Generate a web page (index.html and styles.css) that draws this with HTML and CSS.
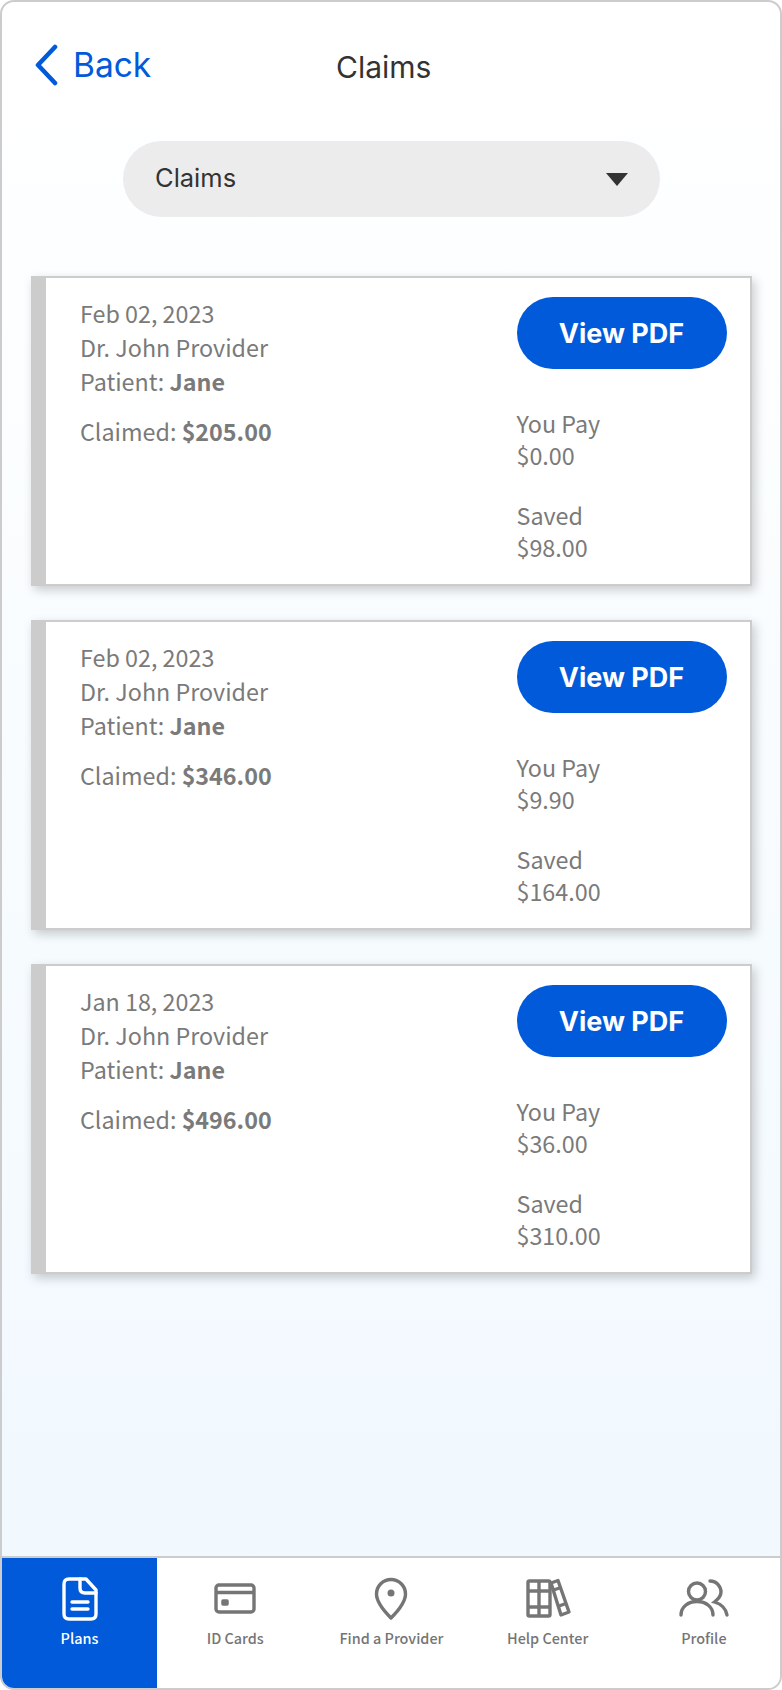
FILE: index.html
```html
<!DOCTYPE html>
<html lang="en">
<head>
    <meta charset="UTF-8">
    <meta name="viewport" content="width=device-width, initial-scale=1.0">
    <title>Claims</title>
    <link rel="stylesheet" href="styles.css">
</head>
<body>
    <div class="phone">
        <div class="content">
            <div class="top-bar">
                <a class="back-link" href="#">
                    <svg class="back-icon" width="24" height="42" viewBox="0 0 24 42"><path d="M21 3 L4 21 L21 39" fill="none" stroke="#005ada" stroke-width="4.5" stroke-linecap="round" stroke-linejoin="round"/></svg>
                    <span>Back</span>
                </a>
                <div class="page-title">Claims</div>
            </div>

            <div class="select-wrap">
                <div class="select-box">
                    <span class="select-text">Claims</span>
                    <span class="select-arrow"></span>
                </div>
            </div>

            <div class="claim-list">
                <div class="claim-card">
                    <div class="claim-info">
                        <div>Feb 02, 2023</div>
                        <div>Dr. John Provider</div>
                        <div>Patient: <b>Jane</b></div>
                        <div class="claimed">Claimed: <b>$205.00</b></div>
                    </div>
                    <div class="claim-side">
                        <button class="pdf-btn">View PDF</button>
                        <div class="amount">You Pay<br>$0.00</div>
                        <div class="amount">Saved<br>$98.00</div>
                    </div>
                </div>

                <div class="claim-card">
                    <div class="claim-info">
                        <div>Feb 02, 2023</div>
                        <div>Dr. John Provider</div>
                        <div>Patient: <b>Jane</b></div>
                        <div class="claimed">Claimed: <b>$346.00</b></div>
                    </div>
                    <div class="claim-side">
                        <button class="pdf-btn">View PDF</button>
                        <div class="amount">You Pay<br>$9.90</div>
                        <div class="amount">Saved<br>$164.00</div>
                    </div>
                </div>

                <div class="claim-card">
                    <div class="claim-info">
                        <div>Jan 18, 2023</div>
                        <div>Dr. John Provider</div>
                        <div>Patient: <b>Jane</b></div>
                        <div class="claimed">Claimed: <b>$496.00</b></div>
                    </div>
                    <div class="claim-side">
                        <button class="pdf-btn">View PDF</button>
                        <div class="amount">You Pay<br>$36.00</div>
                        <div class="amount">Saved<br>$310.00</div>
                    </div>
                </div>
            </div>
        </div>

        <nav class="bottom-nav">
            <a class="nav-item active" href="#">
                <svg width="50" height="44" viewBox="0 0 50 44" fill="none" stroke="currentColor" stroke-width="3.400" stroke-linecap="round" stroke-linejoin="round">
                    <path d="M14 2 H31 L41 13 V37 Q41 42 36 42 H14 Q9 42 9 37 V7 Q9 2 14 2 Z"/>
                    <path d="M25 2 V11 Q25 16 30 16 H41"/>
                    <path d="M17 25 H33 M17 32 H33"/>
                </svg>
                <span>Plans</span>
            </a>
            <a class="nav-item" href="#">
                <svg width="50" height="44" viewBox="0 0 50 44" fill="none" stroke="currentColor" stroke-width="3.400" stroke-linejoin="round">
                    <rect x="6" y="8" width="38" height="27" rx="3"/>
                    <path d="M6 15.5 H44" stroke-width="3.5"/>
                    <rect x="12" y="23" width="6" height="5" rx="1" fill="currentColor" stroke-width="1.5"/>
                </svg>
                <span>ID Cards</span>
            </a>
            <a class="nav-item" href="#">
                <svg width="50" height="44" viewBox="0 0 50 44" fill="none" stroke="currentColor" stroke-width="3.400" stroke-linejoin="round">
                    <path d="M25 41 C17 33 10.500 25 10.500 17 A14.500 14.500 0 0 1 39.500 17 C39.500 25 33 33 25 41 Z"/>
                    <circle cx="25" cy="16" r="3.500" fill="currentColor" stroke="none"/>
                </svg>
                <span>Find a Provider</span>
            </a>
            <a class="nav-item" href="#">
                <svg width="50" height="44" viewBox="0 0 50 44" fill="none" stroke="currentColor" stroke-width="3.400" stroke-linejoin="round">
                    <rect x="5" y="4" width="22" height="35" rx="1.500"/>
                    <path d="M16 4 V39 M5 14 H27 M5 30 H27"/>
                    <path d="M28 6 L35 3.500 L46 35 L38 38 Z"/>
                    <path d="M30.500 13 L38 10.500 M36 29 L43 26.500"/>
                </svg>
                <span>Help Center</span>
            </a>
            <a class="nav-item" href="#">
                <svg width="50" height="44" viewBox="0 0 50 44" fill="none" stroke="currentColor" stroke-width="3.400" stroke-linecap="round">
                    <circle cx="18" cy="14.500" r="8.500"/>
                    <path d="M2 38 C2 30 9 24.500 18 24.500 C27 24.500 34 30 34 38"/>
                    <path d="M31 4 C38 4 42 10 42 15 C42 20 38 23 35.500 25 C42 27 47 32 48 38"/>
                </svg>
                <span>Profile</span>
            </a>
        </nav>
    </div>
</body>
</html>
```

FILE: styles.css
```css
* {
    box-sizing: border-box;
}

body {
    margin: 0;
    padding: 0;
    font-family: "Noto Sans CJK SC", "Noto Sans", sans-serif;
    background: #fff;
}

.phone {
    width: 782px;
    height: 1690px;
    display: flex;
    flex-direction: column;
    border: 2px solid #cccccc;
    border-radius: 14px;
    overflow: hidden;
    background: linear-gradient(to bottom, #ffffff, #f0f8fe);
}

.content {
    flex: 1;
    padding: 0 28px 0 29px;
}

.top-bar {
    display: flex;
    align-items: center;
    height: 126px;
}

.back-link {
    display: flex;
    align-items: center;
    gap: 15px;
    margin-left: 3px;
    width: 302px;
    color: #005ada;
    font-family: Inter, sans-serif;
    font-size: 33.500px;
    line-height: 40px;
    text-decoration: none;
}

.page-title {
    margin-top: 4px;
    font-family: Inter, sans-serif;
    font-size: 30px;
    line-height: 40px;
    color: #333333;
}

.select-wrap {
    display: flex;
    justify-content: center;
    margin-top: 13px;
}

.select-box {
    width: 537px;
    height: 76px;
    display: flex;
    align-items: center;
    justify-content: space-between;
    padding: 0 32px;
    border-radius: 38px;
    background: #ececec;
    font-family: Inter, sans-serif;
    font-size: 25.500px;
    color: #333333;
}

.select-text {
    margin-bottom: 3px;
}

.select-arrow {
    width: 0;
    height: 0;
    border-left: 11px solid transparent;
    border-right: 11px solid transparent;
    border-top: 13px solid #333333;
}

.claim-list {
    display: flex;
    flex-direction: column;
    gap: 34px;
    margin-top: 59px;
}

.claim-card {
    height: 310px;
    display: flex;
    justify-content: space-between;
    background: #fff;
    border: 2px solid #cccccc;
    border-left: 15px solid #cccccc;
    box-shadow: 3px 4px 10px rgba(0, 0, 0, 0.2);
    color: #7a7a7a;
    font-size: 23.300px;
    line-height: 34px;
}

.claim-info {
    padding: 18px 0 0 34px;
}

.claimed {
    margin-top: 16px;
}

.claim-side {
    width: 233.500px;
    padding-top: 19px;
    line-height: 32px;
}

.pdf-btn {
    display: block;
    width: 210px;
    height: 72px;
    margin-bottom: 38px;
    border: none;
    border-radius: 36px;
    background: #005ada;
    color: #fff;
    font-family: Inter, sans-serif;
    font-size: 27px;
    font-weight: 700;
}

.amount {
    margin-bottom: 28px;
}

.bottom-nav {
    height: 132px;
    display: flex;
    border-top: 2px solid #cccccc;
    background: #fff;
}

.nav-item {
    flex: 0 0 156.200px;
    display: flex;
    flex-direction: column;
    align-items: center;
    padding-top: 19px;
    color: #757575;
    font-size: 14.400px;
    font-weight: 500;
    line-height: 22px;
    text-decoration: none;
}

.nav-item svg {
    margin-bottom: 6px;
}

.nav-item.active {
    flex-basis: 155px;
    margin-right: 0.200px;
    background: #005ada;
    color: #fff;
}
```
